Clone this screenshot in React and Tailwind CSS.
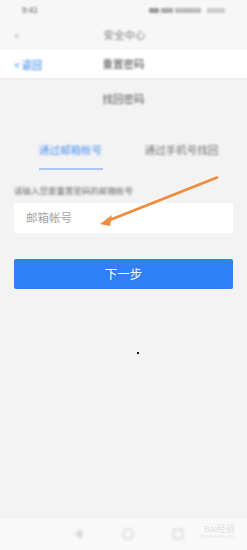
import React from "react";

const font = { fontFamily: '"Noto Sans CJK SC", "Noto Sans", sans-serif' };

export default function App() {
  return (
    <div className="relative w-[247px] h-[550px] bg-[#f3f3f3] overflow-hidden flex flex-col" style={font}>
      {/* status bar */}
      <div className="h-[20px] bg-[#f7f7f7] flex items-center justify-between px-[22px] blur-[1px]">
        <span className="text-[8px] text-[#777] font-medium">9:41</span>
        <div className="flex items-center gap-[2px] text-[7px] text-[#888]">
          <span className="w-[10px] h-[5px] bg-[#999] rounded-[1px]" />
          <span className="w-[12px] h-[5px] bg-[#aaa]" />
          <span className="w-[26px] h-[5px] bg-[#bbb]" />
          <span className="w-[18px] h-[5px] bg-[#ccc] ml-[4px]" />
        </div>
      </div>
      {/* header 1 */}
      <div className="h-[30px] bg-[#f7f7f7] flex items-center relative">
        <span className="absolute left-[14px] text-[10px] text-[#aaa] blur-[1px]">&lt;</span>
        <div className="flex-1 text-center text-[10.5px] text-[#999] font-medium blur-[1.3px] pl-[2px]">安全中心</div>
      </div>
      {/* header 2 */}
      <div className="h-[29px] bg-white flex items-center relative border-b border-[#ececec]">
        <span className="absolute left-[14px] text-[10px] text-[#4a90f0] font-medium blur-[1px]">&lt; 返回</span>
        <div className="flex-1 text-center text-[10.5px] text-[#666] font-medium blur-[1.3px]">重置密码</div>
      </div>
      {/* subtitle */}
      <div className="h-[40px] flex items-center justify-center">
        <span className="text-[10.5px] text-[#777] font-medium blur-[1.3px]">找回密码</span>
      </div>
      {/* tabs */}
      <div className="flex mt-[23px] h-[28px]">
        <div className="flex-1 flex flex-col items-center pl-[15px]">
          <span className="text-[10.5px] text-[#6ea6f3] font-medium blur-[1.3px] leading-[16px]">通过邮箱帐号</span>
          <div className="shrink-0 mt-[10px] w-[64px] h-[1.5px] bg-[#a9c9f5] blur-[0.5px]" />
        </div>
        <div className="flex-1 flex flex-col items-center pr-[10px]">
          <span className="text-[10.5px] text-[#8a8a8a] font-medium blur-[1.3px] leading-[16px]">通过手机号找回</span>
        </div>
      </div>
      {/* hint */}
      <div className="mt-[13px] px-[14px] h-[14px] flex items-center">
        <span className="text-[8.5px] text-[#888] font-medium blur-[1.1px]">请输入您要重置密码的邮箱帐号</span>
      </div>
      {/* input */}
      <div className="mt-[6px] mx-[14px] h-[30px] bg-white flex items-center px-[12px]">
        <span className="text-[11.5px] text-[#a3a3a3]">邮箱帐号</span>
      </div>
      {/* button */}
      <div className="mt-[26px] mx-[14px] h-[30px] bg-[#2f80f7] rounded-[2px] flex items-center justify-center">
        <span className="text-[12.5px] text-white">下一步</span>
      </div>
      {/* dot */}
      <div className="mt-[63px] flex justify-center pl-[29px]">
        <div className="w-[2px] h-[2px] bg-[#111]" />
      </div>
      <div className="flex-1" />
      {/* bottom nav */}
      <div className="h-[33px] bg-[#f9f9f9] border-t border-[#efefef] flex items-center relative">
        <div className="flex-1 flex justify-center gap-[38px] pl-[8px] blur-[1.5px]">
          <svg width="12" height="12" viewBox="0 0 12 12"><polygon points="10,1 10,11 2,6" fill="#d6d6d6" /></svg>
          <svg width="12" height="12" viewBox="0 0 12 12"><circle cx="6" cy="6" r="5" fill="none" stroke="#d6d6d6" strokeWidth="1.5" /></svg>
          <svg width="12" height="12" viewBox="0 0 12 12"><rect x="1.5" y="1.5" width="9" height="9" fill="none" stroke="#d6d6d6" strokeWidth="1.5" /></svg>
        </div>
        <div className="absolute right-[12px] top-[6px] flex flex-col items-end blur-[0.6px]">
          <span className="text-[9px] leading-[10px] text-[#ddd]" style={{ fontFamily: '"Liberation Sans", "Noto Sans CJK SC", sans-serif' }}>Bai经验</span>
          <span className="text-[4px] leading-[5px] text-[#e2e2e2]">jingyan.baidu.com</span>
        </div>
      </div>
      {/* orange arrow overlay */}
      <svg className="absolute left-0 top-0" width="247" height="550" viewBox="0 0 247 550">
        <line x1="217" y1="177.5" x2="106" y2="221.5" stroke="#f08a3c" strokeWidth="2.6" strokeLinecap="round" />
        <polygon points="100,224 112,215 110,226" fill="#f08a3c" />
      </svg>
    </div>
  );
}
